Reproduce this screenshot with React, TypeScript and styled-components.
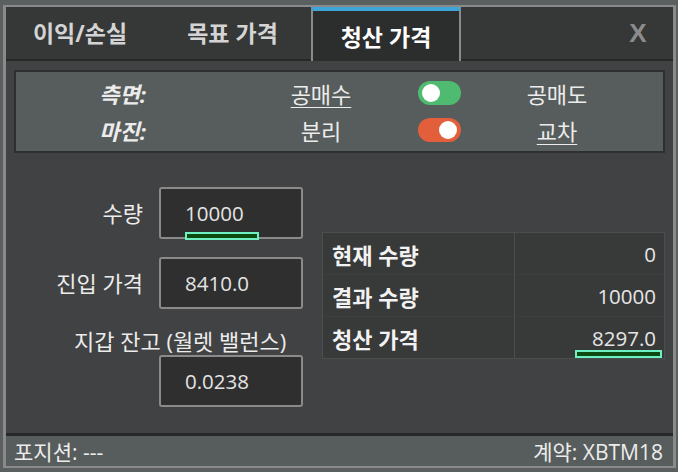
import React from "react";
import styled, { createGlobalStyle } from "styled-components";

const Global = createGlobalStyle`
  html, body { margin: 0; padding: 0; }
  body {
    background: #5a5f5f;
    width: 678px;
    height: 472px;
    overflow: hidden;
    font-family: "Open Sans", "Noto Sans CJK KR", sans-serif;
  }
`;

const Page = styled.div`
  padding: 5px 2px 0 3px;
`;

const Window = styled.div`
  width: 667px;
  height: 459px;
  border: 3px solid #8a8a8a;
  border-top-width: 2px;
  border-bottom-width: 2px;
  background: #414243;
  display: flex;
  flex-direction: column;
`;

const TabBar = styled.div`
  display: flex;
  height: 52px;
  background: #363837;
  border-bottom: 2px solid #262727;
`;

const Tab = styled.div<{ $active?: boolean; $w: number }>`
  width: ${(p) => p.$w}px;
  box-sizing: border-box;
  display: flex;
  align-items: center;
  justify-content: center;
  font-size: 23px;
  font-weight: 700;
  color: ${(p) => (p.$active ? "#ffffff" : "#d4d4d4")};
  background: ${(p) => (p.$active ? "#2c2d2d" : "transparent")};
  border-top: ${(p) => (p.$active ? "4px solid #3ea6d6" : "none")};
  border-left: ${(p) => (p.$active ? "2px solid #8a8a8a" : "none")};
  border-right: ${(p) => (p.$active ? "2px solid #8a8a8a" : "none")};
  margin-bottom: ${(p) => (p.$active ? "-2px" : "0")};
  padding-bottom: ${(p) => (p.$active ? "1px" : "2px")};
`;

const CloseBtn = styled.div`
  margin-left: auto;
  width: 50px;
  margin-right: 10px;
  display: flex;
  align-items: center;
  justify-content: center;
  font-family: "Liberation Sans", Arial, sans-serif;
  font-size: 26px;
  font-weight: 700;
  color: #8c8c8c;
`;

const Content = styled.div`
  flex: 1;
  padding: 9px 8px 0 8px;
  display: flex;
  flex-direction: column;
`;

const SettingsBox = styled.div`
  height: 79px;
  border: 2px solid #2e2f2f;
  background: #575d5c;
  display: grid;
  grid-template-columns: 130px 105px 140px 27px 43px 26px 140px;
  grid-template-rows: 37px 37px;
  align-content: center;
  color: #ececec;
  font-size: 22px;
`;

const SetLabel = styled.div`
  grid-column: 1;
  font-weight: 700;
  font-style: italic;
  display: flex;
  align-items: center;
  justify-content: flex-end;
`;

const Option = styled.div<{ $u?: boolean; $col: number }>`
  grid-column: ${(p) => p.$col};
  display: flex;
  align-items: center;
  justify-content: center;
  white-space: nowrap;
  span {
    text-decoration: ${(p) => (p.$u ? "underline" : "none")};
    text-decoration-thickness: 1px;
    text-underline-offset: 4px;
  }
`;

const ToggleCell = styled.div`
  grid-column: 5;
  display: flex;
  align-items: center;
`;

const Toggle = styled.div<{ $on?: boolean; $color: string }>`
  width: 43px;
  height: 24px;
  border-radius: 12px;
  background: ${(p) => p.$color};
  position: relative;
  &::after {
    content: "";
    position: absolute;
    top: 3px;
    left: ${(p) => (p.$on ? "21px" : "4px")};
    width: 18px;
    height: 18px;
    border-radius: 50%;
    background: #ffffff;
  }
`;

const Lower = styled.div`
  flex: 1;
  display: grid;
  grid-template-columns: 308px 1fr;
`;

const Form = styled.div`
  display: flex;
  flex-direction: column;
  padding-top: 34px;
`;

const FieldRow = styled.div`
  display: flex;
  align-items: center;
  margin-bottom: 18px;
`;

const FieldLabel = styled.div`
  width: 129px;
  margin-right: 16px;
  text-align: right;
  color: #ececec;
  font-size: 22px;
  white-space: nowrap;
  padding-bottom: 3px;
`;

const WideLabel = styled.div`
  padding-left: 60px;
  height: 28px;
  line-height: 28px;
  color: #ececec;
  font-size: 22px;
  white-space: nowrap;
`;

const InputBox = styled.div<{ $indent?: number }>`
  position: relative;
  width: 144px;
  height: 52px;
  box-sizing: border-box;
  border: 2px solid #8a8a8a;
  border-radius: 3px;
  background: #2f2f2f;
  display: flex;
  align-items: center;
  padding-left: 24px;
  color: #e4e4e4;
  font-size: 20.5px;
  margin-left: ${(p) => p.$indent ?? 0}px;
`;

const Marker = styled.div<{ $left: number; $width: number; $bottom: number }>`
  position: absolute;
  left: ${(p) => p.$left}px;
  bottom: ${(p) => p.$bottom}px;
  width: ${(p) => p.$width}px;
  height: 8px;
  box-sizing: border-box;
  border: 2px solid #6df0c2;
  background: #0d4a12;
`;

const Table = styled.div`
  margin-top: 79px;
  align-self: start;
  width: 341px;
  border: 1px solid #4c4d4e;
  display: grid;
  grid-template-columns: 191px 1fr;
  background: #383939;
`;

const Cell = styled.div<{ $value?: boolean }>`
  position: relative;
  height: 41px;
  display: flex;
  align-items: center;
  justify-content: ${(p) => (p.$value ? "flex-end" : "flex-start")};
  padding: ${(p) => (p.$value ? "0 8px 0 0" : "0 0 0 9px")};
  border-left: ${(p) => (p.$value ? "1px solid #4c4d4e" : "none")};
  border-top: 1px solid #3d3e3f;
  font-size: ${(p) => (p.$value ? "20.5px" : "22px")};
  font-weight: ${(p) => (p.$value ? 400 : 700)};
  color: ${(p) => (p.$value ? "#e6e6e6" : "#f2f2f2")};
  white-space: nowrap;
  &:nth-child(-n + 2) {
    border-top: none;
  }
`;

const Footer = styled.div`
  height: 30px;
  border-top: 3px solid #262727;
  background: #575d5c;
  display: flex;
  align-items: center;
  justify-content: space-between;
  padding: 0 10px 0 8px;
  color: #ececec;
  font-size: 21px;
`;

export default function App() {
  return (
    <>
      <Global />
      <Page>
        <Window>
          <TabBar>
            <Tab $w={148}>이익/손실</Tab>
            <Tab $w={157}>목표 가격</Tab>
            <Tab $w={150} $active>
              청산 가격
            </Tab>
            <CloseBtn>X</CloseBtn>
          </TabBar>
          <Content>
            <SettingsBox>
              <SetLabel>측면:</SetLabel>
              <Option $u $col={3}>
                <span>공매수</span>
              </Option>
              <ToggleCell>
                <Toggle $color="#4fbb70" />
              </ToggleCell>
              <Option $col={7}>
                <span>공매도</span>
              </Option>
              <SetLabel>마진:</SetLabel>
              <Option $col={3}>
                <span>분리</span>
              </Option>
              <ToggleCell>
                <Toggle $color="#e35f3b" $on />
              </ToggleCell>
              <Option $u $col={7}>
                <span>교차</span>
              </Option>
            </SettingsBox>
            <Lower>
              <Form>
                <FieldRow>
                  <FieldLabel>수량</FieldLabel>
                  <InputBox>
                    10000
                    <Marker $left={24} $width={74} $bottom={-3} />
                  </InputBox>
                </FieldRow>
                <FieldRow>
                  <FieldLabel>진입 가격</FieldLabel>
                  <InputBox>8410.0</InputBox>
                </FieldRow>
                <WideLabel>지갑 잔고 (월렛 밸런스)</WideLabel>
                <InputBox $indent={145}>0.0238</InputBox>
              </Form>
              <Table>
                <Cell>현재 수량</Cell>
                <Cell $value>0</Cell>
                <Cell>결과 수량</Cell>
                <Cell $value>10000</Cell>
                <Cell>청산 가격</Cell>
                <Cell $value>
                  8297.0
                  <Marker $left={60} $width={87} $bottom={0} />
                </Cell>
              </Table>
            </Lower>
          </Content>
          <Footer>
            <span>포지션: ---</span>
            <span>계약: XBTM18</span>
          </Footer>
        </Window>
      </Page>
    </>
  );
}
